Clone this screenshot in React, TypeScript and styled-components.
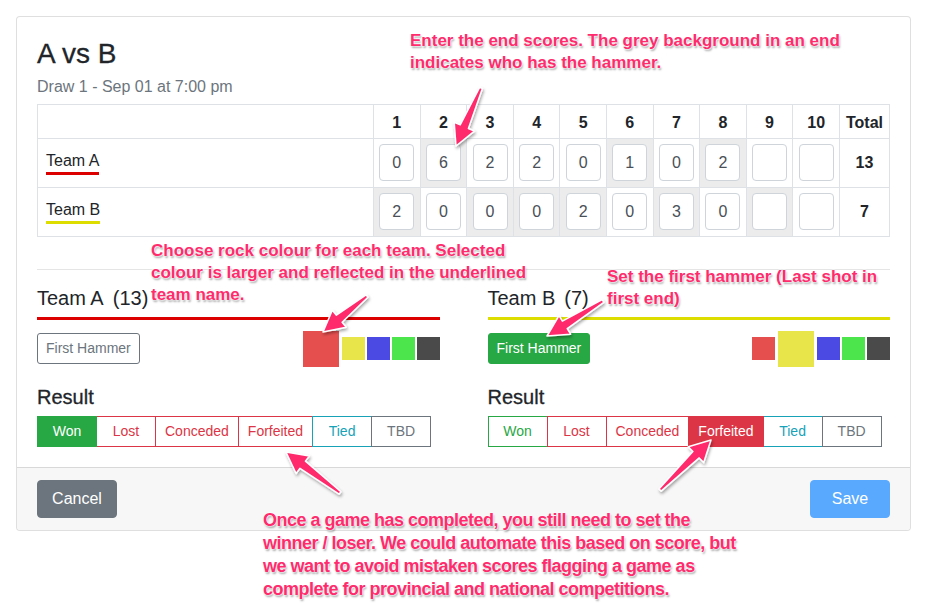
import React from "react";
import styled, { createGlobalStyle, css } from "styled-components";

const Global = createGlobalStyle`
  html, body { margin: 0; padding: 0; background: #fff; }
  body { font-family: "Liberation Sans", Arial, sans-serif; color: #212529; }
  * { box-sizing: border-box; }
`;

const Page = styled.div`
  position: relative;
  width: 930px;
  height: 607px;
  padding: 16px 19px 0 16px;
  overflow: hidden;
`;

const Card = styled.div`
  border: 1px solid rgba(0, 0, 0, 0.125);
  border-radius: 4px;
  background: #fff;
`;

const CardBody = styled.div`
  padding: 20px 20px 20px 20px;
`;

const Title = styled.h2`
  margin: 0 0 3px;
  font-size: 28px;
  font-weight: 400;
  line-height: 1.2;
  -webkit-text-stroke: 0.3px #212529;
`;

const Subtitle = styled.div`
  color: #6c757d;
  font-size: 16px;
  line-height: 25px;
  margin-bottom: 5px;
`;

const Table = styled.table`
  width: 100%;
  border-collapse: collapse;
  table-layout: fixed;
  border: 1px solid #dee2e6;
`;

const Th = styled.th`
  border: 1px solid #dee2e6;
  height: 34px;
  padding: 3px 0 0;
  font-size: 16px;
  font-weight: 700;
  text-align: center;
  vertical-align: middle;
`;

const Td = styled.td<{ $hammer?: boolean }>`
  border: 1px solid #dee2e6;
  height: 49px;
  padding: 0;
  text-align: center;
  vertical-align: middle;
  background: ${(p) => (p.$hammer ? "#ececec" : "transparent")};
`;

const NameTd = styled.td`
  border: 1px solid #dee2e6;
  height: 49px;
  padding: 0 0 0 8px;
  vertical-align: middle;
`;

const TotalTd = styled.td`
  border: 1px solid #dee2e6;
  height: 49px;
  padding: 0;
  text-align: center;
  vertical-align: middle;
  font-weight: 700;
  font-size: 16px;
`;

const TeamName = styled.span<{ $color: string }>`
  display: inline-block;
  font-size: 16px;
  line-height: 20px;
  padding-bottom: 1px;
  border-bottom: 3px solid ${(p) => p.$color};
`;

const ScoreBox = styled.div`
  width: 35px;
  height: 37px;
  margin: 0 auto;
  border: 1px solid #ced4da;
  border-radius: 4px;
  background: #fff;
  color: #495057;
  font-size: 16px;
  display: flex;
  align-items: center;
  justify-content: center;
`;

const Rule = styled.hr`
  border: 0;
  border-top: 1px solid rgba(0, 0, 0, 0.1);
  margin: 32px 0 16px;
`;

const Teams = styled.div`
  display: grid;
  grid-template-columns: 1fr 1fr;
  column-gap: 48px;
`;

const TeamCol = styled.div`
  display: flex;
  flex-direction: column;
`;

const TeamHeading = styled.div<{ $color: string }>`
  font-size: 20px;
  line-height: 24px;
  padding-bottom: 7px;
  border-bottom: 3px solid ${(p) => p.$color};
`;

const Score = styled.span`
  margin-left: 9px;
`;

const HammerRow = styled.div`
  display: flex;
  align-items: center;
  justify-content: space-between;
  margin-top: 11px;
  height: 36px;
`;

const SmallButton = styled.button<{ $active?: boolean }>`
  font-family: inherit;
  font-size: 14px;
  line-height: 21px;
  padding: 4px 8px;
  border-radius: 3px;
  cursor: pointer;
  ${(p) =>
    p.$active
      ? css`
          background: #28a745;
          border: 1px solid #28a745;
          color: #fff;
        `
      : css`
          background: #fff;
          border: 1px solid #6c757d;
          color: #6c757d;
        `}
`;

const Swatches = styled.div`
  display: flex;
  align-items: center;
  gap: 2px;
`;

const Swatch = styled.div<{ $color: string; $selected?: boolean }>`
  background: ${(p) => p.$color};
  width: ${(p) => (p.$selected ? 36 : 23)}px;
  height: ${(p) => (p.$selected ? 36 : 23)}px;
  ${(p) => p.$selected && css`margin: 0 1px;`}
`;

const ResultHeading = styled.div`
  font-size: 20px;
  line-height: 24px;
  margin-top: 18px;
  margin-bottom: 7px;
  -webkit-text-stroke: 0.3px #212529;
`;

const Group = styled.div`
  display: flex;
`;

const variants: Record<string, string> = {
  success: "#28a745",
  danger: "#dc3545",
  info: "#17a2b8",
  secondary: "#6c757d",
};

const GroupButton = styled.button<{ $variant: string; $active?: boolean }>`
  font-family: inherit;
  font-size: 14px;
  line-height: 21px;
  padding: 4px 9px;
  min-width: 60px;
  border-radius: 0;
  border: 1px solid ${(p) => variants[p.$variant]};
  background: ${(p) => (p.$active ? variants[p.$variant] : "#fff")};
  color: ${(p) => (p.$active ? "#fff" : variants[p.$variant])};
  position: relative;
  z-index: ${(p) => (p.$active ? 1 : 0)};
  & + & {
    margin-left: -1px;
  }
`;

const Footer = styled.div`
  display: flex;
  justify-content: space-between;
  align-items: center;
  padding: 12px 20px;
  background: #f7f7f7;
  border-top: 1px solid rgba(0, 0, 0, 0.125);
  border-radius: 0 0 4px 4px;
`;

const Button = styled.button<{ $variant: "secondary" | "primary" }>`
  font-family: inherit;
  font-size: 16px;
  line-height: 24px;
  padding: 6px 12px;
  min-width: 80px;
  border-radius: 4px;
  color: #fff;
  ${(p) =>
    p.$variant === "secondary"
      ? css`
          background: #6c757d;
          border: 1px solid #6c757d;
        `
      : css`
          background: #59a9ff;
          border: 1px solid #59a9ff;
        `}
`;

const Note = styled.div<{ $narrow?: boolean }>`
  position: absolute;
  z-index: 5;
  color: #ff2b6c;
  font-weight: 700;
  font-size: 17px;
  line-height: 22px;
  white-space: nowrap;
  text-shadow: 0 0 1px #fff, 0 0 2px #fff, 0 0 2px #fff, 1px 2px 2px rgba(0, 0, 0, 0.35);
  ${(p) =>
    p.$narrow &&
    css`
      font-size: 18px;
      line-height: 23px;
      letter-spacing: -0.5px;
    `}
`;

const Overlay = styled.svg`
  position: absolute;
  left: 0;
  top: 0;
  z-index: 6;
  pointer-events: none;
`;

type Pt = [number, number];

function arrowPoints(t: Pt, p: Pt): string {
  const dx = p[0] - t[0];
  const dy = p[1] - t[1];
  const L = Math.hypot(dx, dy);
  const ux = dx / L;
  const uy = dy / L;
  const nx = -uy;
  const ny = ux;
  const headLen = 21;
  const hx = p[0] - ux * headLen;
  const hy = p[1] - uy * headLen;
  const pts: Pt[] = [
    [t[0] + nx * 1.5, t[1] + ny * 1.5],
    [hx + nx * 4.5, hy + ny * 4.5],
    [hx + nx * 11, hy + ny * 11],
    p,
    [hx - nx * 11, hy - ny * 11],
    [hx - nx * 4.5, hy - ny * 4.5],
    [t[0] - nx * 1.5, t[1] - ny * 1.5],
  ];
  return pts.map((q) => `${q[0].toFixed(1)},${q[1].toFixed(1)}`).join(" ");
}

const arrows: [Pt, Pt][] = [
  [[481, 88], [456, 146]],
  [[367, 296], [323, 332]],
  [[603, 301], [547, 336]],
  [[340, 493], [286, 452]],
  [[660, 490], [711, 440]],
];

type Team = {
  name: string;
  color: string;
  scores: (number | null)[];
  hammer: number[];
  total: number;
};

const teams: Team[] = [
  { name: "Team A", color: "#dd0000", scores: [0, 6, 2, 2, 0, 1, 0, 2, null, null], hammer: [2, 6, 8], total: 13 },
  { name: "Team B", color: "#dddd00", scores: [2, 0, 0, 0, 2, 0, 3, 0, null, null], hammer: [1, 3, 4, 5, 7, 9], total: 7 },
];

const swatchColors = ["#e5504f", "#e8e54a", "#4b4be3", "#4ce64c", "#4a4a4a"];
const results: [string, string][] = [
  ["Won", "success"],
  ["Lost", "danger"],
  ["Conceded", "danger"],
  ["Forfeited", "danger"],
  ["Tied", "info"],
  ["TBD", "secondary"],
];

const sides = [
  { name: "Team A", score: 13, color: "#dd0000", selected: 0, hammer: false, result: "Won" },
  { name: "Team B", score: 7, color: "#dddd00", selected: 1, hammer: true, result: "Forfeited" },
];

export default function App() {
  const ends = Array.from({ length: 10 }, (_, i) => i + 1);
  return (
    <Page>
      <Global />
      <Card>
        <CardBody>
          <Title>A vs B</Title>
          <Subtitle>Draw 1 - Sep 01 at 7:00 pm</Subtitle>
          <Table>
            <colgroup>
              <col style={{ width: 336 }} />
              {ends.map((e) => (
                <col key={e} style={{ width: 46.6 }} />
              ))}
              <col style={{ width: 50 }} />
            </colgroup>
            <thead>
              <tr>
                <Th />
                {ends.map((e) => (
                  <Th key={e}>{e}</Th>
                ))}
                <Th>Total</Th>
              </tr>
            </thead>
            <tbody>
              {teams.map((t) => (
                <tr key={t.name}>
                  <NameTd>
                    <TeamName $color={t.color}>{t.name}</TeamName>
                  </NameTd>
                  {t.scores.map((s, i) => (
                    <Td key={i} $hammer={t.hammer.includes(i + 1)}>
                      <ScoreBox>{s === null ? "" : s}</ScoreBox>
                    </Td>
                  ))}
                  <TotalTd>{t.total}</TotalTd>
                </tr>
              ))}
            </tbody>
          </Table>
          <Rule />
          <Teams>
            {sides.map((s) => (
              <TeamCol key={s.name}>
                <TeamHeading $color={s.color}>
                  {s.name}
                  <Score>({s.score})</Score>
                </TeamHeading>
                <HammerRow>
                  <SmallButton $active={s.hammer}>First Hammer</SmallButton>
                  <Swatches>
                    {swatchColors.map((c, i) => (
                      <Swatch key={c} $color={c} $selected={i === s.selected} />
                    ))}
                  </Swatches>
                </HammerRow>
                <ResultHeading>Result</ResultHeading>
                <Group>
                  {results.map(([label, v]) => (
                    <GroupButton key={label} $variant={v} $active={label === s.result}>
                      {label}
                    </GroupButton>
                  ))}
                </Group>
              </TeamCol>
            ))}
          </Teams>
        </CardBody>
        <Footer>
          <Button $variant="secondary">Cancel</Button>
          <Button $variant="primary">Save</Button>
        </Footer>
      </Card>

      <Note style={{ left: 410, top: 30 }}>
        Enter the end scores. The grey background in an end
        <br />
        indicates who has the hammer.
      </Note>
      <Note style={{ left: 151, top: 240 }}>
        Choose rock colour for each team. Selected
        <br />
        colour is larger and reflected in the underlined
        <br />
        team name.
      </Note>
      <Note style={{ left: 607, top: 266 }}>
        Set the first hammer (Last shot in
        <br />
        first end)
      </Note>
      <Note $narrow style={{ left: 263, top: 509 }}>
        Once a game has completed, you still need to set the
        <br />
        winner / loser. We could automate this based on score, but
        <br />
        we want to avoid mistaken scores flagging a game as
        <br />
        complete for provincial and national competitions.
      </Note>

      <Overlay width={930} height={607} viewBox="0 0 930 607">
        <defs>
          <filter id="shadow" x="-20%" y="-20%" width="140%" height="140%">
            <feDropShadow dx="1" dy="2" stdDeviation="1.5" floodColor="#000" floodOpacity="0.35" />
          </filter>
        </defs>
        {arrows.map(([t, p], i) => (
          <polygon
            key={i}
            points={arrowPoints(t, p)}
            fill="#ff2b6c"
            stroke="#fff"
            strokeWidth={1.5}
            strokeLinejoin="round"
            filter="url(#shadow)"
          />
        ))}
      </Overlay>
    </Page>
  );
}
